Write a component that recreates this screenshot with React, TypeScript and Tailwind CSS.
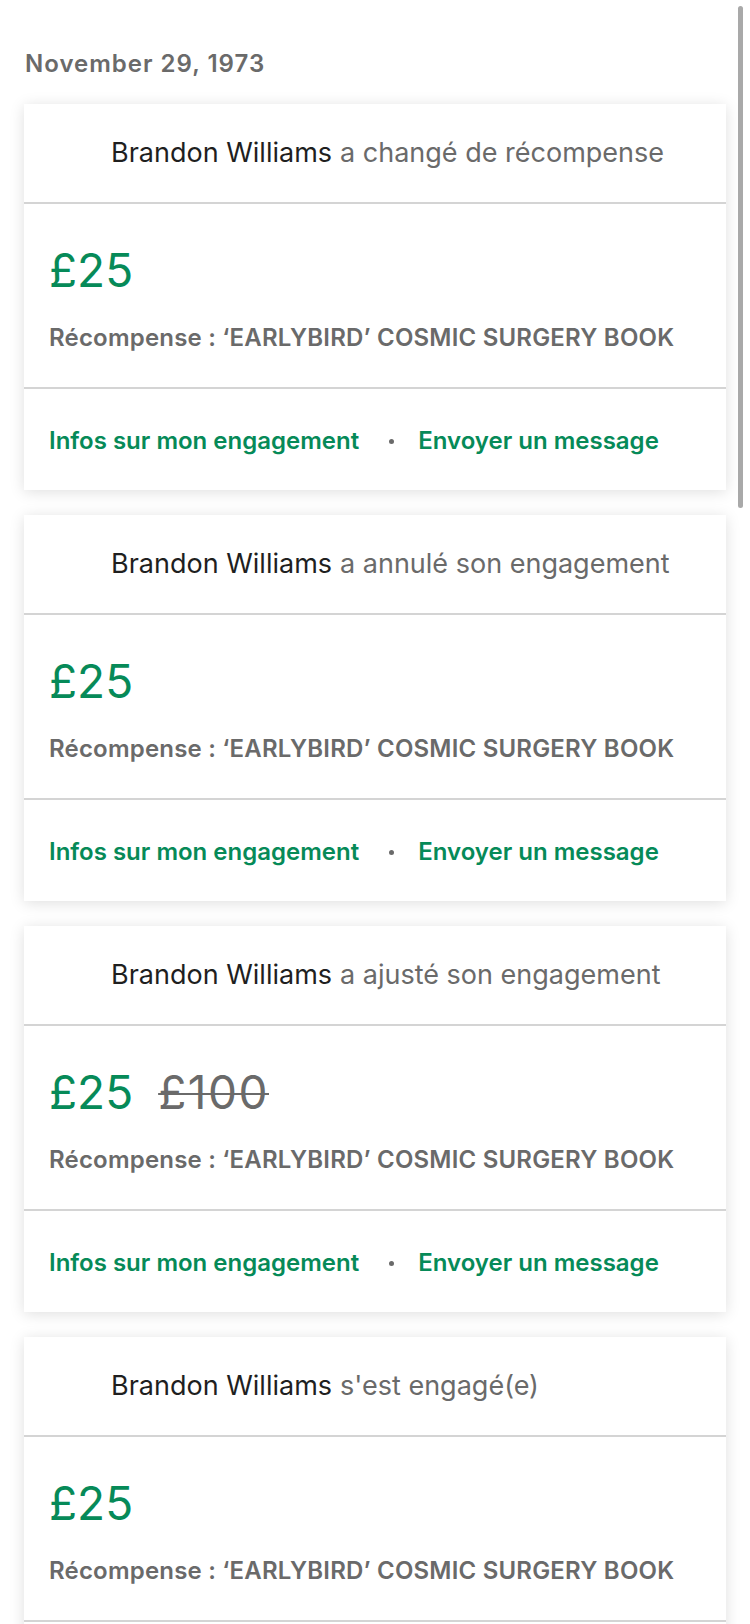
const font = { fontFamily: '"Inter", "Liberation Sans", sans-serif' };

type Item = {
  action: string;
  amount: string;
  old?: string;
};

const items: Item[] = [
  { action: "a changé de récompense", amount: "£25" },
  { action: "a annulé son engagement", amount: "£25" },
  { action: "a ajusté son engagement", amount: "£25", old: "£100" },
  { action: "s'est engagé(e)", amount: "£25" },
];

const Card = ({ item }: { item: Item }) => {
  return (
    <div className="bg-white shadow-[0_2px_14px_rgba(0,0,0,0.13)]">
      <div className="h-[98px] flex items-center pl-[87px] text-[27px] whitespace-nowrap">
        <span className="text-[#1f1f1f]">Brandon Williams</span>
        <span className="text-[#6a6a6a] ml-[8px]">{item.action}</span>
      </div>
      <div className="border-t-2 border-[#d4d4d4] pt-[38px] pb-[35px] px-[25px]">
        <div className="flex items-center gap-[25px] h-[56px] text-[46px] leading-[56px]">
          <span className="text-[#068a58]">{item.amount}</span>
          {item.old && (
            <span className="text-[#6a6a6a] line-through decoration-2 tracking-[1.5px]">{item.old}</span>
          )}
        </div>
        <p className="mt-[26px] text-[24px] leading-[28px] font-semibold text-[#6a6a6a] tracking-[0.2px] whitespace-nowrap">
          Récompense : ‘EARLYBIRD’ COSMIC SURGERY BOOK
        </p>
      </div>
      <div className="border-t-2 border-[#d4d4d4] h-[103px] pt-[3px] flex items-center px-[25px] text-[24px] font-semibold text-[#068a58] whitespace-nowrap">
        <span>Infos sur mon engagement</span>
        <span className="ml-[30px] mr-[24px] w-[5px] h-[5px] rounded-full bg-[#6a6a6a]" />
        <span>Envoyer un message</span>
      </div>
    </div>
  );
};

export default function App() {
  return (
    <div className="relative w-[750px] h-[1624px] overflow-hidden bg-white" style={font}>
      <div className="px-6 pt-[50px]">
        <h2 className="h-[28px] leading-[28px] text-[24px] font-semibold text-[#6a6a6a] tracking-[1px] pl-px">
          November 29, 1973
        </h2>
        <div className="mt-[26px] flex flex-col gap-[25px]">
          {items.map((item, i) => (
            <Card key={i} item={item} />
          ))}
        </div>
      </div>
      <div className="absolute right-[7px] top-[6px] w-[5px] h-[502px] rounded-full bg-[#a9a9a9]" />
    </div>
  );
}
